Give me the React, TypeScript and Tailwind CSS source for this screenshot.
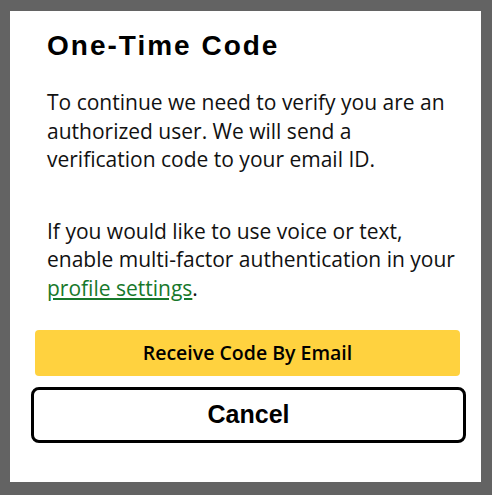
export default function App() {
  return (
    <div className="w-[492px] h-[495px] bg-[#636363] pt-[11px] pl-[10px]">
      <div className="w-[471px] h-[471px] bg-white pt-[19px] flex flex-col">
        <h1 className="pl-[37px] text-[28px] leading-[32px] font-bold tracking-[2px] text-black font-['Liberation_Sans',Arial,sans-serif]">
          One-Time Code
        </h1>
        <div className="pl-[37px] pr-[8px] mt-[26px] text-[21px] leading-[28.5px] text-[#111] font-['Open_Sans',sans-serif]">
          <p>
            To continue we need to verify you are an
            <br />
            authorized user. We will send a
            <br />
            verification code to your email ID.
          </p>
          <p className="mt-[43px]">
            If you would like to use voice or text,
            <br />
            enable multi-factor authentication in your
            <br />
            <a href="#" className="text-[#17782b] underline underline-offset-2">profile settings</a>.
          </p>
        </div>
        <div className="mt-[28px] flex flex-col items-start">
          <button className="ml-[25px] w-[425px] h-[46px] rounded-[4px] bg-[#ffd23f] text-[19.5px] font-semibold text-black font-['Open_Sans',sans-serif]">
            Receive Code By Email
          </button>
          <button className="ml-[21px] mt-[11px] w-[435px] h-[56px] rounded-[8px] border-[3px] border-black bg-white text-[25px] font-bold text-black font-['Liberation_Sans',Arial,sans-serif]">
            Cancel
          </button>
        </div>
      </div>
    </div>
  )
}
